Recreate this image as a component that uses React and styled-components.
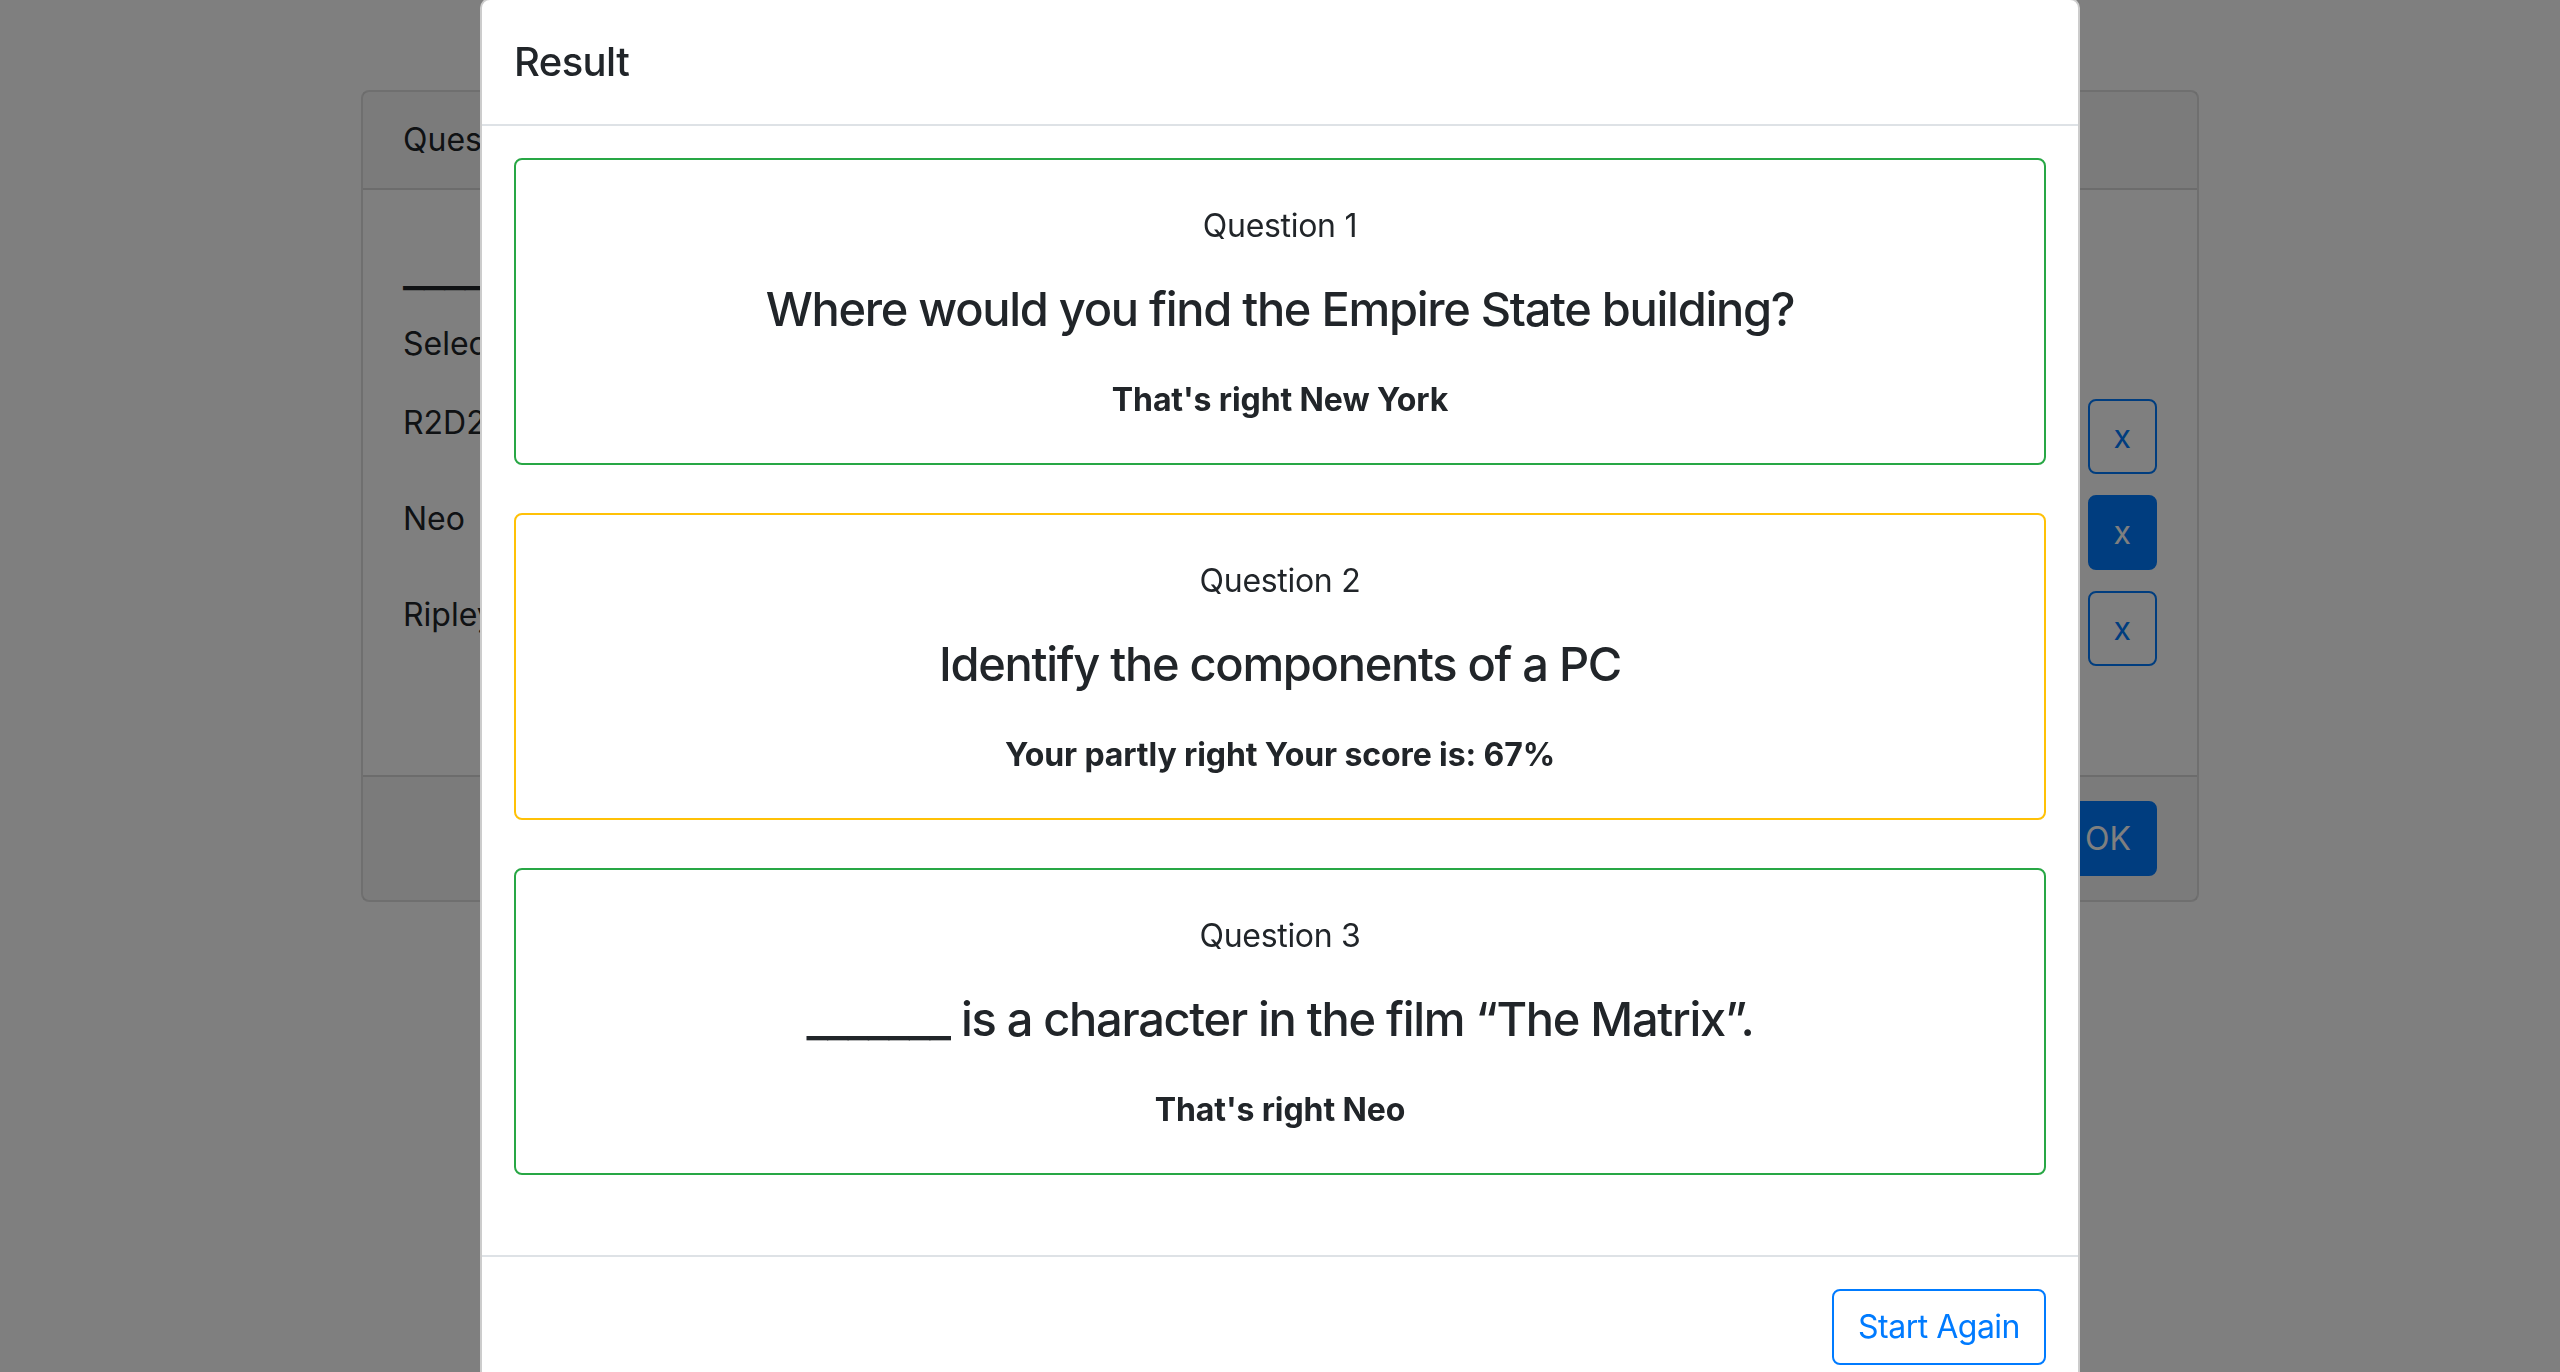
import React from 'react';
import styled, { createGlobalStyle } from 'styled-components';

const GlobalStyle = createGlobalStyle`
  html, body {
    margin: 0;
    height: 100%;
    overflow: hidden;
    background: #fff;
  }
  body {
    font-family: Inter, "Noto Sans", "Liberation Sans", sans-serif;
    color: #212529;
  }
  * {
    box-sizing: border-box;
  }
`;

const results = [
  {
    id: 1,
    question: 'Where would you find the Empire State building?',
    answer: "That's right New York",
    status: 'correct',
  },
  {
    id: 2,
    question: 'Identify the components of a PC',
    answer: 'Your partly right Your score is: 67%',
    status: 'partial',
  },
  {
    id: 3,
    question: '_______ is a character in the film “The Matrix”.',
    answer: "That's right Neo",
    status: 'correct',
  },
];

const options = [
  { label: 'R2D2', active: false },
  { label: 'Neo', active: true },
  { label: 'Ripley', active: false },
];

const borderColors = {
  correct: '#28a745',
  partial: '#ffc107',
  wrong: '#dc3545',
};

export default function App() {
  return (
    <>
      <GlobalStyle />
      <Page>
        <QuizCard>
          <QuizHeader>Question 3</QuizHeader>
          <QuizBody>
            <QuizQuestion>_______ is a character in the film “The Matrix”.</QuizQuestion>
            <QuizHint>Select the correct answer</QuizHint>
            <OptionList>
              {options.map(o => (
                <OptionRow key={o.label}>
                  <OptionLabel>{o.label}</OptionLabel>
                  <SmallButton active={o.active}>x</SmallButton>
                </OptionRow>
              ))}
            </OptionList>
          </QuizBody>
          <QuizFooter>
            <SmallButton active>OK</SmallButton>
          </QuizFooter>
        </QuizCard>
      </Page>

      <Backdrop />

      <Modal>
        <ModalHeader>
          <ModalTitle>Result</ModalTitle>
        </ModalHeader>
        <ModalBody>
          {results.map(r => (
            <ResultCard key={r.id} status={r.status}>
              <ResultLabel>Question {r.id}</ResultLabel>
              <ResultQuestion>{r.question}</ResultQuestion>
              <ResultAnswer>{r.answer}</ResultAnswer>
            </ResultCard>
          ))}
        </ModalBody>
        <ModalFooter>
          <OutlineButton>Start Again</OutlineButton>
        </ModalFooter>
      </Modal>
    </>
  );
}

/* page behind the dialog */

const Page = styled.div`
  height: 1372px;
  padding-top: 90px;
`;

const QuizCard = styled.div`
  width: 1838px;
  margin: 0 auto;
  display: flex;
  flex-direction: column;
  border: 2px solid rgba(0, 0, 0, 0.125);
  border-radius: 8px;
`;

const QuizHeader = styled.div`
  padding: 24px 40px;
  font-size: 32px;
  line-height: 48px;
  background: rgba(0, 0, 0, 0.03);
  border-bottom: 2px solid rgba(0, 0, 0, 0.125);
`;

const QuizBody = styled.div`
  padding: 40px 40px 109px;
`;

const QuizQuestion = styled.h4`
  margin: 10px 0 22px;
  font-size: 47px;
  font-weight: 500;
  line-height: 58px;
  letter-spacing: -1.3px;
`;

const QuizHint = styled.p`
  margin: 0 0 31px;
  font-size: 32px;
  line-height: 48px;
`;

const OptionList = styled.div`
  display: flex;
  flex-direction: column;
  gap: 21px;
`;

const OptionRow = styled.div`
  display: flex;
  justify-content: space-between;
  align-items: flex-start;
`;

const OptionLabel = styled.span`
  font-size: 32px;
  line-height: 48px;
`;

const SmallButton = styled.button`
  height: 75px;
  padding: 0 24px;
  font-family: inherit;
  font-size: 32px;
  line-height: 48px;
  border-radius: 8px;
  border: 2px solid #007bff;
  color: ${p => (p.active ? '#fff' : '#007bff')};
  background: ${p => (p.active ? '#007bff' : 'transparent')};
`;

const QuizFooter = styled.div`
  display: flex;
  justify-content: flex-end;
  padding: 24px 40px;
  background: rgba(0, 0, 0, 0.03);
  border-top: 2px solid rgba(0, 0, 0, 0.125);
`;

/* dialog */

const Backdrop = styled.div`
  position: fixed;
  inset: 0;
  background: rgba(0, 0, 0, 0.5);
`;

const Modal = styled.div`
  position: fixed;
  top: -2px;
  left: 50%;
  width: 1600px;
  transform: translateX(-50%);
  display: flex;
  flex-direction: column;
  background: #fff;
  border: 2px solid rgba(0, 0, 0, 0.2);
  border-radius: 10px;
`;

const ModalHeader = styled.div`
  padding: 32px;
  border-bottom: 2px solid #dee2e6;
`;

const ModalTitle = styled.h5`
  margin: 0;
  font-size: 40px;
  font-weight: 500;
  line-height: 60px;
  letter-spacing: -0.6px;
`;

const ModalBody = styled.div`
  padding: 32px;
  display: flex;
  flex-direction: column;
  gap: 48px;
  padding-bottom: 80px;
`;

const ResultCard = styled.div`
  height: 307px;
  padding: 40px;
  display: flex;
  flex-direction: column;
  align-items: center;
  text-align: center;
  border: 2px solid ${p => borderColors[p.status]};
  border-radius: 8px;
`;

const ResultLabel = styled.div`
  font-size: 32px;
  line-height: 48px;
  letter-spacing: -0.3px;
  padding-top: 2px;
`;

const ResultQuestion = styled.h4`
  margin: 30px 0 0;
  font-size: 47px;
  font-weight: 500;
  line-height: 58px;
  letter-spacing: -1.3px;
`;

const ResultAnswer = styled.p`
  margin: 38px 0 0;
  font-size: 32px;
  font-weight: 700;
  line-height: 48px;
  letter-spacing: -0.1px;
`;

const ModalFooter = styled.div`
  display: flex;
  justify-content: flex-end;
  padding: 32px;
  border-top: 2px solid #dee2e6;
`;

const OutlineButton = styled.button`
  height: 76px;
  padding: 0 24px;
  font-family: inherit;
  font-size: 32px;
  line-height: 48px;
  letter-spacing: -0.5px;
  color: #007bff;
  background: transparent;
  border: 2px solid #007bff;
  border-radius: 8px;
`;
